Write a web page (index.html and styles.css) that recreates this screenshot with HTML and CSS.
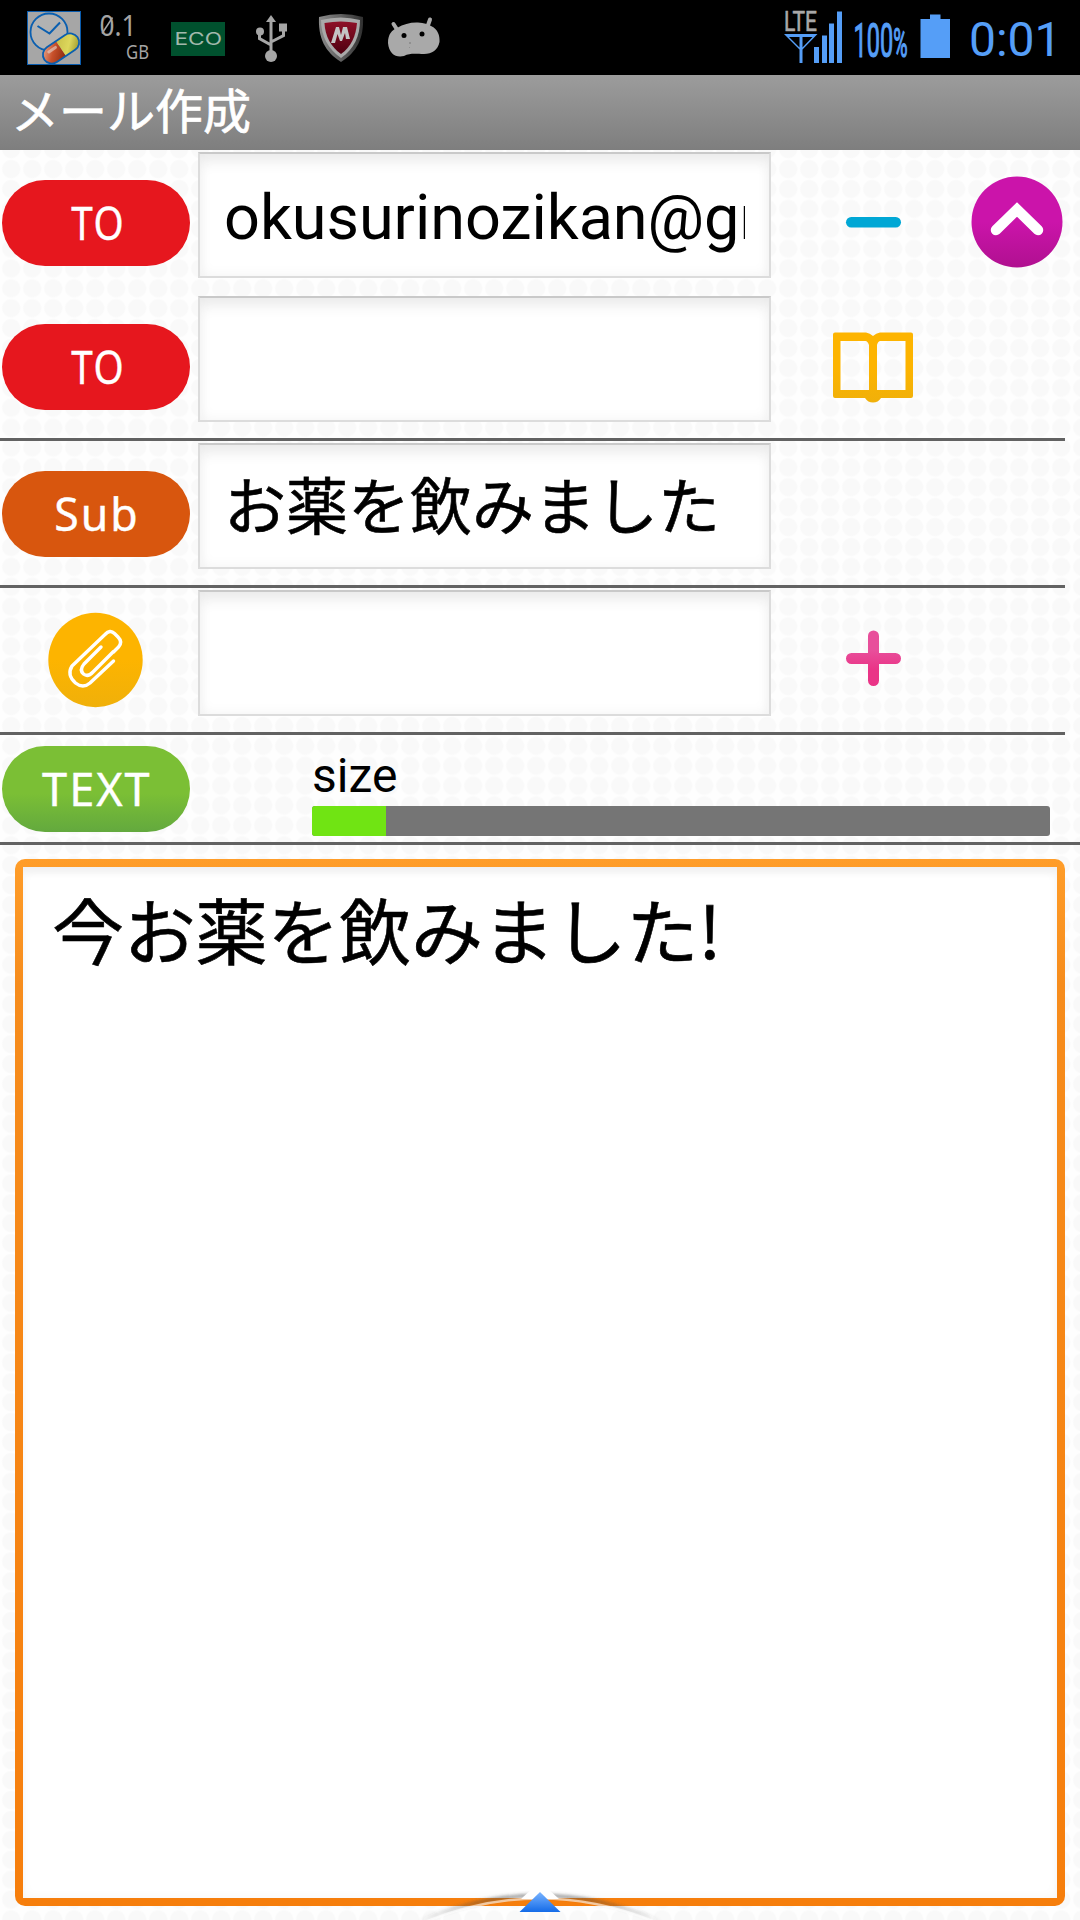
FILE: index.html
```html
<!DOCTYPE html>
<html lang="ja">
<head>
<meta charset="utf-8">
<title>メール作成</title>
<link rel="stylesheet" href="styles.css">
</head>
<body>
<div class="screen">
  <header class="status">
    <svg class="status-icons" width="460" height="75" viewBox="0 0 460 75">
      <defs>
        <linearGradient id="pillRed" x1="0" y1="0" x2="1" y2="1"><stop offset="0" stop-color="#e9b7a0"/><stop offset=".5" stop-color="#c8502a"/><stop offset="1" stop-color="#8c2a10"/></linearGradient>
        <linearGradient id="pillYellow" x1="0" y1="0" x2="1" y2="1"><stop offset="0" stop-color="#c9c04a"/><stop offset=".5" stop-color="#ddd75c"/><stop offset="1" stop-color="#8f8a20"/></linearGradient>
        <linearGradient id="shieldRed" x1="0" y1="0" x2="0" y2="1"><stop offset="0" stop-color="#8e1027"/><stop offset="1" stop-color="#4e0010"/></linearGradient>
        <linearGradient id="shieldEdge" x1="0" y1="0" x2="1" y2="0"><stop offset="0" stop-color="#8a8a8a"/><stop offset=".5" stop-color="#606060"/><stop offset="1" stop-color="#303030"/></linearGradient>
      </defs>
      <rect x="27.5" y="11.5" width="53" height="53" fill="#a6a6a6" stroke="#0a5cae"/>
      <circle cx="49" cy="32" r="18.5" fill="#b2b2b2" stroke="#0a5fb0" stroke-width="1.8"/>
      <path d="M37.500 26 49.500 33.500 60 22.500" fill="none" stroke="#0a5fb0" stroke-width="2"/>
      <g transform="translate(61 48.500) rotate(-34)">
        <path d="M0-9H-11A9 9 0 0 0-11 9H0Z" fill="url(#pillRed)"/>
        <path d="M0-9H11A9 9 0 0 1 11 9H0Z" fill="url(#pillYellow)"/>
        <rect x="-20" y="-9" width="40" height="18" rx="9" fill="none" stroke="#0a5fb0" stroke-width="1.800"/>
        <path d="M-12-4H-4" stroke="#e8d8d0" stroke-width="3" stroke-linecap="round" opacity=".6"/>
      </g>
      <g fill="#a4a4a4" font-family="'Noto Sans',sans-serif">
        <text x="99.500" y="36" font-size="29" textLength="37" lengthAdjust="spacingAndGlyphs">0.1</text>
        <path d="M102 33.500 112.500 17.500" stroke="#a4a4a4" stroke-width="1.500"/>
        <text x="126" y="59" font-size="20" textLength="23" lengthAdjust="spacingAndGlyphs">GB</text>
      </g>
      <rect x="171" y="22" width="54" height="34" fill="#00512e"/>
      <text x="174.500" y="45" font-family="Inter,sans-serif" font-size="17" fill="#a2b8ac" textLength="47.500" lengthAdjust="spacingAndGlyphs">ECO</text>
      <g fill="#a6a6a6" stroke="#a6a6a6">
        <path d="M271 15 276 22H266Z" stroke="none"/>
        <path d="M271 20V54M259.500 31V38.500L271 45M283.500 27V35.500L271 42" fill="none" stroke-width="3"/>
        <circle cx="260" cy="31.500" r="4" stroke="none"/><circle cx="271" cy="56" r="6" stroke="none"/>
        <rect x="279" y="23.500" width="8" height="8" stroke="none"/>
      </g>
      <path d="M319 17Q341 11 363 17C364 38 357 52 341 62C325 52 318 38 319 17Z" fill="url(#shieldEdge)"/>
      <path d="M321 20Q341 15 360 20C360 36 354 49 341 58C328 49 321 36 321 20Z" fill="#a9a9a9"/>
      <path d="M324.500 23Q341 20 357 23C356 36 351 47 341 54C331 47 325 36 324.500 23Z" fill="url(#shieldRed)"/>
      <path d="M331 43 336 27H339L341 35 343 27H347L350 39H346L345 33 342 41H340L337.500 34 335 43Z" fill="#c4c4c4"/>
      <g fill="#a9a9a9">
        <path d="M397 28Q407 22 418 22.500 427 23 431 26C438 29 440 36 439.500 42 438 50 432 54 424 54 415 54 410 53 404 56 396 58 389 54 388 43 388 34 392 30 397 28Z"/>
        <path d="M393.500 24 398 31M430 19.500 427 28" stroke="#a9a9a9" stroke-width="4" stroke-linecap="round"/>
        <circle cx="404" cy="35.500" r="2.500" fill="#000"/><circle cx="422" cy="34" r="2.500" fill="#000"/>
        <path d="M409 42h2v2h-2zM409 47h1v1h-1z" fill="#909090"/>
      </g>
    </svg>
    <svg class="status-system" width="310" height="75" viewBox="770 0 310 75">
      <text x="784" y="31" font-family="Roboto,sans-serif" font-size="27" fill="#a8a8a8" stroke="#a8a8a8" stroke-width=".6" textLength="33" lengthAdjust="spacingAndGlyphs">LTE</text>
      <g fill="#559ef7">
        <path d="M784 34H817.500L802.500 49.500V63H799.500V49.500ZM789 37 799.500 47.500V37ZM802.500 37V47.500L812.500 37Z" fill-rule="evenodd"/>
        <path d="M814 47h5v16h-5zM822 35.500h5V63h-5zM829 23.500h5V63h-5zM837 11.500h5V63h-5z"/>
        <path d="M920.500 19H930V14.500H940.500V19H950V58H920.500Z"/>
        <text x="853.500" y="57" font-family="Roboto,sans-serif" font-size="48" stroke="#559ef7" stroke-width="1.200" textLength="54" lengthAdjust="spacingAndGlyphs">100<tspan font-size="40">%</tspan></text>
        <text x="969" y="56" font-family="Roboto,sans-serif" font-size="48">0:01</text>
      </g>
    </svg>
  </header>
  <h1 class="title">メール作成</h1>

  <main class="compose">
    <section class="row">
      <span class="tag tag-to"><span>TO</span></span>
      <div class="field latin"><span>okusurinozikan@gm</span></div>
      <svg class="icon" width="204" height="144" viewBox="771 0 204 144">
        <rect x="846" y="67" width="55" height="10.500" rx="5.200" fill="#00a7d5"/>
      </svg>
      <svg class="icon" width="105" height="144" viewBox="0 0 105 144">
        <defs><linearGradient id="magenta" x1="0" y1="0" x2="0" y2="1"><stop offset=".5" stop-color="#cb14aa"/><stop offset="1" stop-color="#b01090"/></linearGradient></defs>
        <circle cx="42" cy="72" r="45.500" fill="url(#magenta)"/>
        <path d="M21 80 42 59.500 63 80" fill="none" stroke="#fff" stroke-width="10.500" stroke-linecap="round"/>
      </svg>
    </section>
    <section class="row">
      <span class="tag tag-to"><span>TO</span></span>
      <div class="field"></div>
      <svg class="icon" width="204" height="144" viewBox="771 0 204 144">
        <defs><linearGradient id="amber" x1="0" y1="0" x2="0" y2="1"><stop offset=".5" stop-color="#fdb400"/><stop offset="1" stop-color="#f0b00a"/></linearGradient></defs>
        <path fill="url(#amber)" fill-rule="evenodd" d="M835 38.500H866Q870 39 873 42 876 39 880 38.500H911Q913 38.500 913 40.500V102Q913 104 911 104H881Q878 108.500 873 108.500T865 104H835Q833 104 833 102V40.500Q833 38.500 835 38.500ZM840.500 47V96H869V51Q867.500 47 865.500 47ZM880.500 47Q878 47 877 51V96H905.500V47Z"/>
      </svg>
    </section>
    <hr class="rule">
    <section class="row">
      <span class="tag tag-sub"><span>Sub</span></span>
      <div class="field ja"><span>お薬を飲みました</span></div>
    </section>
    <hr class="rule">
    <section class="row">
      <svg class="icon" width="198" height="144" viewBox="0 0 198 144">
        <circle cx="95.500" cy="72" r="47.200" fill="url(#amber)"/>
        <path d="M101 59 84 76Q79 82 83.500 86 88 89.500 93 84L113.500 63.500M113.500 73 90 95Q83 101 75.500 95 66.500 87 72 78L105 46.500Q110 41 114.500 45.500L118 49Q123 54 118.500 59L113.500 64" fill="none" stroke="#fff" stroke-width="3.400" stroke-linecap="round" stroke-linejoin="round"/>
      </svg>
      <div class="field"></div>
      <svg class="icon" width="204" height="144" viewBox="771 0 204 144">
        <defs><linearGradient id="pink" x1="0" y1="0" x2="0" y2="1"><stop offset=".35" stop-color="#e84f9b"/><stop offset=".7" stop-color="#ea3487"/></linearGradient></defs>
        <path fill="url(#pink)" d="M868 65V48a5.500 5.500 0 0 1 11 0V65H895.500a5.500 5.500 0 0 1 0 11H879V92.500a5.500 5.500 0 0 1-11 0V76H851.500a5.500 5.500 0 0 1 0-11Z"/>
      </svg>
    </section>
    <hr class="rule">
    <section class="row row-text">
      <span class="tag tag-text"><span>TEXT</span></span>
      <div class="size">
        <span class="size-label">size</span>
        <div class="meter"><div class="meter-fill" style="width:10%"></div></div>
      </div>
    </section>
    <hr class="rule rule-full">
    <div class="editor"><div class="editor-paper"><span>今お薬を飲みました!</span></div></div>
  </main>

  <svg class="handle" width="260" height="50" viewBox="410 1870 260 50">
    <defs>
      <linearGradient id="blue" x1="0" y1="0" x2="0" y2="1"><stop offset="0" stop-color="#7ab4ff"/><stop offset="1" stop-color="#146be8"/></linearGradient>
      <linearGradient id="arcFade" x1="0" y1="0" x2="1" y2="0"><stop offset="0" stop-color="#444" stop-opacity="0"/><stop offset=".3" stop-color="#444" stop-opacity=".45"/><stop offset=".7" stop-color="#444" stop-opacity=".45"/><stop offset="1" stop-color="#444" stop-opacity="0"/></linearGradient>
      <filter id="soft" x="-10%" y="-60%" width="120%" height="220%"><feGaussianBlur stdDeviation="1.500"/></filter>
    </defs>
    <path d="M418 1922Q540 1869 662 1922" fill="none" stroke="url(#arcFade)" stroke-width="4" filter="url(#soft)"/>
    <path d="M425 1922Q540 1875 655 1922" fill="none" stroke="#fff" stroke-opacity=".6" stroke-width="2.500"/>
    <path d="M521 1899 535 1886H545L559 1899Z" fill="#fff"/>
    <path d="M540 1892 560.500 1912H519.500Z" fill="url(#blue)"/>
  </svg>
</div>
</body>
</html>
```
FILE: styles.css
```css
* { box-sizing: border-box; }

body {
  margin: 0;
  background: #fff;
  font-family: Roboto, "Noto Sans CJK JP", sans-serif;
  color: #000;
}

.screen {
  position: relative;
  display: flex;
  flex-direction: column;
  width: 1080px;
  height: 1920px;
  overflow: hidden;
}

.status {
  display: flex;
  justify-content: space-between;
  height: 75px;
  background: #000;
}

.status svg { display: block; }

.title {
  display: flex;
  align-items: center;
  height: 75px;
  margin: 0;
  padding: 0 0 10px 11px;
  background: linear-gradient(#9c9c9c, #7e7e7e);
  color: #fff;
  font: 400 48px/64px "Noto Sans CJK JP", sans-serif;
  -webkit-text-stroke: 0.7px #fff;
}

.compose {
  display: flex;
  flex-direction: column;
  flex: 1;
  background: radial-gradient(circle at 11.2px 10px, #f9f9f9 8.3px, #fefefe 9.8px) 0 9px / 21px 19.905px;
}

.row {
  display: grid;
  grid-template-columns: 198px 573px 204px 105px;
  height: 144px;
}

.icon {
  display: block;
  overflow: visible;
}

.rule {
  width: 1065px;
  height: 3px;
  margin: 0;
  border: 0;
  background: #626262;
}

.rule-full { width: 1080px; }

.tag {
  display: flex;
  align-items: center;
  justify-content: center;
  width: 188px;
  height: 86px;
  margin: 30px 0 0 2px;
  padding-bottom: 2px;
  border-radius: 43px;
  color: #fff;
  font: 400 46px/60px "Noto Sans", sans-serif;
  letter-spacing: 2px;
  -webkit-text-stroke: 0.4px #fff;
}

.tag-to { background: #e6171e; }
.tag-to span { transform: translateX(2px) scaleX(0.84); }
.tag-sub { background: #d8560e; }
.tag-sub span { transform: translateX(1px) scaleX(0.97); }

.tag-text {
  margin-top: 11px;
  background: linear-gradient(#7bbf35 55%, #63a93e);
}

.tag-text span { transform: translateX(1px) scaleX(0.98); }

.field {
  height: 126px;
  margin-top: 2px;
  padding: 0 26px;
  overflow: hidden;
  border: 2px solid #dcdcdc;
  border-top-color: #c9c9c9;
  background: #fff;
  box-shadow: inset 0 12px 16px -6px #e9e9e9, inset 0 0 14px #f3f3f3;
  white-space: nowrap;
}

.field span {
  display: block;
  overflow: hidden;
}

.latin {
  padding: 0 24px;
  font-size: 63px;
  line-height: 128px;
  letter-spacing: -0.05px;
}

.ja {
  padding-left: 24px;
  font: 400 62px/116px "Noto Sans CJK JP", sans-serif;
  -webkit-text-stroke: 0.6px #000;
}

.row-text {
  grid-template-columns: 312px 738px;
  height: 107px;
}

.size {
  display: flex;
  flex-direction: column;
  padding-top: 14px;
}

.size-label {
  height: 57px;
  font-size: 48px;
  line-height: 54px;
}

.meter {
  height: 30px;
  overflow: hidden;
  border-radius: 3px;
  background: #757575;
}

.meter-fill {
  height: 30px;
  background: #70e413;
}

.editor {
  width: 1050px;
  height: 1047px;
  margin: 14px 0 0 15px;
  padding: 8px;
  border-radius: 10px;
  background: linear-gradient(#ff9d29, #f68c1c 12%, #f67e0c);
}

.editor-paper {
  height: 1031px;
  padding: 15px 29px;
  background: #fff;
  box-shadow: inset 0 8px 6px -2px #f1f1f1, inset 0 0 12px #f6f6f6;
  font: 400 72px/92px "Noto Sans CJK JP", sans-serif;
  letter-spacing: -0.2px;
  white-space: nowrap;
  -webkit-text-stroke: 0.6px #000;
}

.handle {
  position: absolute;
  left: 410px;
  bottom: 0;
}
```
